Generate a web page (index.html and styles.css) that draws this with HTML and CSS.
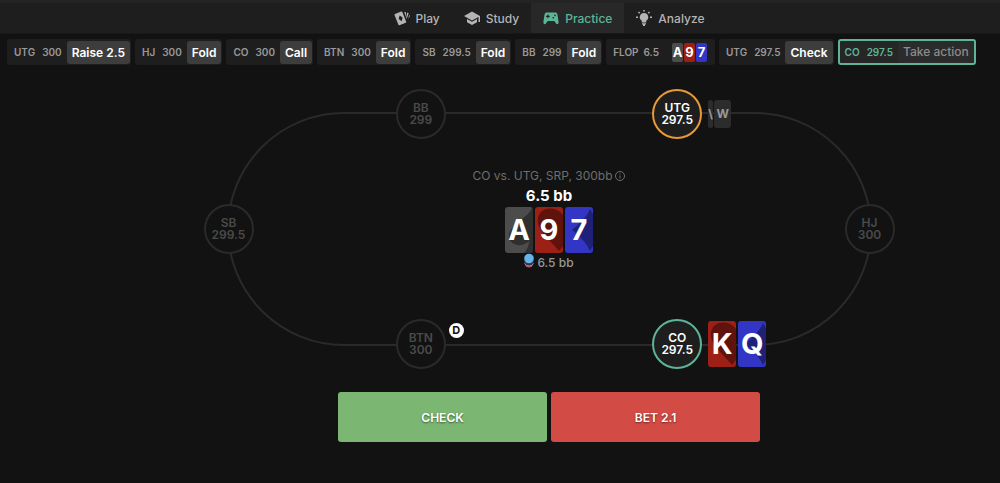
FILE: index.html
```html
<!DOCTYPE html>
<html lang="en">
<head>
<meta charset="UTF-8" />
<meta name="viewport" content="width=device-width, initial-scale=1.0"/>
<title>Practice</title>
<link rel="stylesheet" href="styles.css">
</head>
<body>
<!-- Suit shapes shared by all cards -->
<svg class="defs" aria-hidden="true">
  <symbol id="spade" viewBox="0 0 28 46"><path d="M27 1C24 10 4 18 4 29c0 10 14 12 20 5 0 5-2 9-5 12h9V1z"/></symbol>
  <symbol id="heart" viewBox="0 0 28 46"><path d="M28 8C23 1 15 1 11 2 5 4 2 9 3 16c1 9 13 18 21 28l4-5z"/></symbol>
  <symbol id="diamond" viewBox="0 0 28 46"><path d="M25 2C21 11 14 17 7 23c7 6 14 12 18 21l3-5V7z"/></symbol>
</svg>

<header>
  <nav class="topnav">
    <a href="#">
      <svg viewBox="0 0 16 16"><path fill-rule="evenodd" d="M1 4 7.200 1.600q.8-.3 1.100.5l3.900 9.600q.3.800-.5 1.100L5.500 15.200q-.8.300-1.100-.5L.5 5.100q-.3-.8.500-1.100zM5.600 5.400 4.700 8.900l3 2.400.900-3.900z"/><path d="M10.200 2l1.800.3-.1 4.800zM13.200 2.600l1.500.700-2.100 5.700-.4-1.500z"/><path d="M15.200 5l.8.800-1.800 3.100z"/></svg>
      Play
    </a>
    <a href="#">
      <svg viewBox="0 0 16 16"><path d="M8 1.500 0 6l8 4.500L14.500 6.900V12H16V6z"/><path d="M3 9v3.200L8 15l5-2.800V9l-5 2.800z"/></svg>
      Study
    </a>
    <a href="#" class="active">
      <svg viewBox="0 0 16 16"><path fill-rule="evenodd" d="M3.500 2.500h9q1.600 0 1.900 1.700l1.200 7.600q.2 2.400-1.200 2.400-.8 0-1.300-.8L11.300 11H4.700L2.900 13.400q-.5.800-1.300.8Q.2 14.200.4 11.800L1.600 4.200Q1.900 2.500 3.500 2.500zM4.300 4.500v1.300H3V7h1.300v1.300h1.200V7h1.300V5.800H5.500V4.500zM10.200 6.900a.8.8 0 1 0 .1 0zM11.900 4.600a.8.800 0 1 0 .1 0z"/></svg>
      Practice
    </a>
    <a href="#">
      <svg viewBox="0 0 16 16"><path d="M8 3a4.200 4.200 0 0 1 2.200 7.800V12.500H5.800V10.800A4.200 4.200 0 0 1 8 3zM6 13.200h4v1.300H9V16H7v-1.500H6z"/><path class="rays" d="M8 0v1.600M2.500 2l1.200 1.200M13.500 2l-1.200 1.200M0 7.300h2M14 7.300h2"/></svg>
      Analyze
    </a>
  </nav>
</header>

<!-- Hand history -->
<ol class="history">
  <li><span class="pos">UTG</span><span class="stack">300</span><b>Raise 2.5</b></li>
  <li><span class="pos">HJ</span><span class="stack">300</span><b>Fold</b></li>
  <li><span class="pos">CO</span><span class="stack">300</span><b>Call</b></li>
  <li><span class="pos">BTN</span><span class="stack">300</span><b>Fold</b></li>
  <li><span class="pos">SB</span><span class="stack">299.5</span><b>Fold</b></li>
  <li><span class="pos">BB</span><span class="stack">299</span><b>Fold</b></li>
  <li class="street"><span class="pos">FLOP</span><span class="stack">6.5</span>
    <span class="mini-cards"><i class="spades">A</i><i class="hearts">9</i><i class="diamonds">7</i></span>
  </li>
  <li><span class="pos">UTG</span><span class="stack">297.5</span><b>Check</b></li>
  <li class="current"><span class="pos">CO</span><span class="stack">297.5</span><b>Take action</b></li>
</ol>

<main>
  <!-- Poker table -->
  <section class="table">
    <div class="seat sb">SB<br>299.5</div>
    <div class="seat bb">BB<br>299</div>
    <div class="seat utg">UTG<br>297.5
      <div class="hole folded"><span>\</span><span>W</span></div>
    </div>
    <div class="seat hj">HJ<br>300</div>
    <div class="seat co">CO<br>297.5
      <div class="hole">
        <div class="card hearts"><svg><use href="#heart"/></svg><span>K</span></div>
        <div class="card diamonds"><svg><use href="#diamond"/></svg><span>Q</span></div>
      </div>
    </div>
    <div class="seat btn">BTN<br>300
      <span class="dealer">D</span>
    </div>

    <div class="board">
      <p class="spot">CO vs. UTG, SRP, 300bb
        <svg viewBox="0 0 12 12"><circle cx="6" cy="6" r="4.500"/><path d="M6 5.400v3M6 3.400v1"/></svg>
      </p>
      <p class="total">6.5 bb</p>
      <div class="cards">
        <div class="card spades"><svg><use href="#spade"/></svg><span>A</span></div>
        <div class="card hearts"><svg><use href="#heart"/></svg><span>9</span></div>
        <div class="card diamonds"><svg><use href="#diamond"/></svg><span>7</span></div>
      </div>
      <p class="pot">
        <svg viewBox="0 0 10 15"><circle cx="5" cy="10" r="4.500" fill="#a8455a"/><path d="M1 10.500a4.500 4.500 0 0 0 8 0" fill="none" stroke="#d8a5b0"/><circle cx="5" cy="8" r="4.500" fill="#26344a"/><circle cx="5" cy="5.500" r="4.800" fill="#66b3ea"/></svg>
        6.5 bb
      </p>
    </div>
  </section>

  <div class="actions">
    <button type="button" class="check">CHECK</button>
    <button type="button" class="bet">BET 2.1</button>
  </div>
</main>
</body>
</html>
```
FILE: styles.css
```css
* {
  box-sizing: border-box;
}
body {
  margin: 0;
  background: #121212;
  color: #fff;
  font-family: Inter, "Liberation Sans", sans-serif;
  font-size: 12px;
}
p, ol {
  margin: 0;
  padding: 0;
}
.defs {
  display: none;
}

/* Top navigation */
header {
  padding-left: 98px;
  background: #1e1e1e;
  border-top: 3px solid #242424;
  border-bottom: 1px solid #181818;
}
.topnav {
  display: flex;
  justify-content: center;
}
.topnav a {
  display: flex;
  align-items: center;
  gap: 6px;
  height: 30px;
  padding: 0 12px;
  color: #b4b4b4;
  font-weight: 500;
  text-decoration: none;
}
.topnav svg {
  width: 16px;
  height: 16px;
  fill: currentColor;
}
.topnav .rays {
  stroke: currentColor;
  stroke-width: 1.5;
}
.topnav .active {
  background: #282828;
  color: #5db598;
}

/* Hand history */
.history {
  display: flex;
  gap: 4px;
  padding: 5px 7px 0;
  list-style: none;
  white-space: nowrap;
}
.history li {
  display: flex;
  align-items: center;
  height: 26px;
  padding: 0 1px 0 7px;
  background: #1e1e1e;
  border-radius: 3px;
  color: #999;
  font-size: 10px;
  font-weight: 600;
}
.history .stack {
  margin: 0 5px 0 7px;
}
.history b {
  padding: 0 5px;
  background: #3d3d3d;
  border-radius: 3px;
  color: #fff;
  font-size: 12px;
  font-weight: 600;
  line-height: 23px;
}
.history .street {
  padding-right: 8px;
}
.street .stack {
  margin: 0 13px 0 5px;
}
.mini-cards {
  display: flex;
  gap: 1px;
}
.mini-cards i {
  width: 11px;
  border-radius: 2px;
  color: #fff;
  font-size: 13px;
  font-style: normal;
  font-weight: 700;
  line-height: 19px;
  text-align: center;
}
.history .current {
  padding: 0 0 0 5px;
  background: #262626;
  border: 2px solid #5db598;
  color: #5db598;
}
.history .current b {
  background: #2b2b2b;
  color: #8c8c8c;
  font-weight: 500;
  line-height: 22px;
}

.spades {
  background: #4c4c4c;
}
.hearts {
  background: #9c2015;
}
.diamonds {
  background: #3336c4;
}

/* Table */
main {
  padding: 47px 0 40px 98px;
}
.table {
  position: relative;
  display: flex;
  justify-content: center;
  max-width: 645px;
  height: 234px;
  margin: 0 auto;
  border: 2px solid #2a2a2a;
  border-radius: 117px;
}
.seat {
  position: absolute;
  width: 50px;
  height: 50px;
  padding-top: 11px;
  transform: translate(-50%, -50%);
  background: #121212;
  border: 2px solid #2a2a2a;
  border-radius: 50%;
  color: #4a4a4a;
  font-weight: 600;
  line-height: 12px;
  text-align: center;
}
.sb { left: 0; top: 50%; }
.bb { left: 30%; top: 0; }
.utg { left: 70%; top: 0; }
.hj { left: 100%; top: 50%; }
.co { left: 70%; top: 100%; }
.btn { left: 30%; top: 100%; }
.utg, .co {
  background: #1e1e1e;
  color: #fff;
}
.utg {
  border-color: #e89a35;
}
.co {
  border-color: #5db598;
}
.hole {
  position: absolute;
  left: 54px;
  top: 0;
  display: flex;
  gap: 2px;
}
.folded {
  top: 9px;
  gap: 1px;
  color: #999;
  font-size: 12px;
  font-weight: 700;
  line-height: 28px;
}
.folded span {
  width: 17px;
  height: 28px;
  background: #2c2c2c;
  border-radius: 3px;
}
.folded span:first-child {
  width: 5px;
}
.dealer {
  position: absolute;
  left: 51px;
  top: 2px;
  width: 15px;
  background: #fff;
  border-radius: 50%;
  color: #121212;
  font-size: 11px;
  font-weight: 700;
  line-height: 15px;
}

/* Cards */
.card {
  position: relative;
  width: 28px;
  height: 46px;
  border-radius: 3px;
  color: #fff;
  font-size: 29px;
  font-weight: 700;
  line-height: 46px;
  text-align: center;
  overflow: hidden;
}
.card svg {
  position: absolute;
  inset: 0;
  width: 28px;
  height: 46px;
  fill: #000;
  fill-opacity: .38;
}
.card span {
  position: relative;
}

.board {
  display: flex;
  flex-direction: column;
  align-items: center;
  padding-top: 54px;
}
.spot {
  display: flex;
  align-items: center;
  gap: 1px;
  color: #6e6e6e;
  line-height: 16px;
}
.spot svg {
  width: 12px;
  height: 12px;
  fill: none;
  stroke: currentColor;
}
.total {
  font-size: 15px;
  font-weight: 700;
  line-height: 23px;
}
.cards {
  display: flex;
  gap: 2px;
}
.pot {
  display: flex;
  align-items: flex-start;
  gap: 3px;
  color: #999;
  font-weight: 500;
  line-height: 20px;
}
.pot svg {
  width: 10px;
  height: 15px;
}

/* Actions */
.actions {
  display: grid;
  grid-template-columns: 1fr 1fr;
  gap: 4px;
  max-width: 422px;
  margin: 46px auto 0;
}
.actions button {
  height: 50px;
  border: 0;
  border-radius: 3px;
  color: #fff;
  font-family: inherit;
  font-size: 12px;
  font-weight: 600;
  text-shadow: 0 1px 2px rgba(0,0,0,0.5);
  cursor: pointer;
}
.check {
  background: #7bb772;
}
.bet {
  background: #d34b45;
}
```
